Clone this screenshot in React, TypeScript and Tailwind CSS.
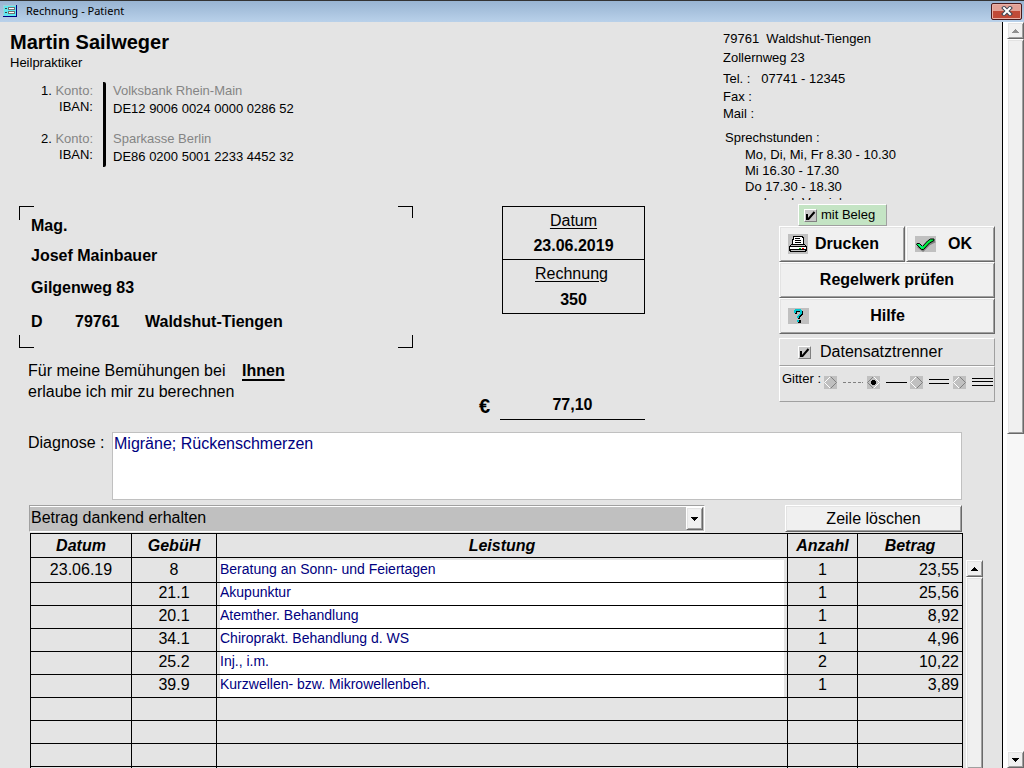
import React, { useState } from "react";
import clsx from "clsx";

const raised =
  "border border-t-white border-l-white border-r-[#696969] border-b-[#696969] bg-[#f0f0f0] shadow-[inset_1px_1px_#e3e3e3,inset_-1px_-1px_#a0a0a0]";
const etched = "border border-t-white border-l-white border-r-[#a0a0a0] border-b-[#a0a0a0]";

const positions = [
  { date: "23.06.19", code: "8", service: "Beratung an Sonn- und Feiertagen", count: "1", amount: "23,55" },
  { date: "", code: "21.1", service: "Akupunktur", count: "1", amount: "25,56" },
  { date: "", code: "20.1", service: "Atemther. Behandlung", count: "1", amount: "8,92" },
  { date: "", code: "34.1", service: "Chiroprakt. Behandlung d. WS", count: "1", amount: "4,96" },
  { date: "", code: "25.2", service: "Inj., i.m.", count: "2", amount: "10,22" },
  { date: "", code: "39.9", service: "Kurzwellen- bzw. Mikrowellenbeh.", count: "1", amount: "3,89" },
];

const emptyRows = [0, 1, 2, 3];

const accounts = [
  { nr: "1", bank: "Volksbank Rhein-Main", iban: "DE12 9006 0024 0000 0286 52" },
  { nr: "2", bank: "Sparkasse Berlin", iban: "DE86 0200 5001 2233 4452 32" },
];

const gridStyles = [
  { name: "Punktiert", line: "M0 4h3v1H0zM5 4h3v1H5zM10 4h3v1h-3zM15 4h3v1h-3zM19 4h1v1h-1z", color: "#808080" },
  { name: "Einfach", line: "M0 4h21v1H0z", color: "#000" },
  { name: "Doppelt", line: "M0 1h20v1H0zM0 5h20v1H0z", color: "#000" },
  { name: "Dreifach", line: "M0 0h21v1H0zM0 3h21v1H0zM0 7h21v1H0z", color: "#000" },
];

const FormIcon = () => (
  <svg width="14" height="12" viewBox="0 0 14 12" shapeRendering="crispEdges">
    <rect width="14" height="12" fill="#000080" />
    <rect width="13" height="11" fill="#5fe8f0" />
    <path d="M0 0h13v1H0zM0 0h1v11H0z" fill="#9fd0d8" />
    <path d="M2 3h2v1H2zM2 7h2v1H2z" fill="#404040" />
    <path d="M5 2h7v3H5zM5 6h7v3H5z" fill="#707070" />
    <path d="M6 3h5v1H6zM6 7h5v1H6z" fill="#fff" />
  </svg>
);

const PrinterIcon = () => (
  <svg width="20" height="20" viewBox="0 0 20 20" shapeRendering="crispEdges">
    <rect width="20" height="20" fill="#c0c0c0" />
    <path d="M5 2h10v1h1v7h1v1h1v1h1v5h-1v1H2v-1H1v-5h1v-1h1v-1h1V5h1z" fill="#000" />
    <path d="M6 3h8v1h1v6H5V6h1z" fill="#fff" />
    <path d="M7 4h5v1H7zM7 6h6v1H7zM7 8h6v1H7z" fill="#000" />
    <path d="M3 11h14v1H3z" fill="#c0c0c0" />
    <path d="M2 13h16v2H2z" fill="#fff" />
    <path d="M3 16h14v1H3z" fill="#c0c0c0" />
    <path d="M11 14h2v1h-2z" fill="#00c000" />
    <path d="M14 14h2v1h-2z" fill="#f00" />
  </svg>
);

const OkIcon = () => (
  <svg width="21" height="16" viewBox="0 0 21 16">
    <rect width="21" height="16" fill="#c0c0c0" />
    <path d="M3 10l5 4 6-6 6-3" stroke="#808080" strokeWidth="3" fill="none" />
    <path d="M2 7.5h2.5l3 3 5-5.5 3-2H19v1.5l-4.500 2.500-6 6.500H6.500L1.500 8.500z" fill="#00f040" stroke="#000" strokeWidth="1" />
    <path d="M3.500 8.500l3 2.500h1.500" stroke="#00ffc0" fill="none" />
  </svg>
);

const HelpIcon = () => (
  <svg width="21" height="16" viewBox="0 0 21 16" shapeRendering="crispEdges">
    <rect width="21" height="16" fill="#c0c0c0" />
    <path d="M8 2h6v1h1v4h-1v1h-1v1h-1v2h-2V8h1V7h1V6h1V4H9v2H7V3h1zM10 12h3v3h-3z" fill="#000" />
    <path d="M7 1h6v1h1v4h-1v1h-1v1h-1v2H9V8h1V7h1V6h1V3H8v2H6V2h1zM9 12h2v2H9z" fill="#00c8d0" />
  </svg>
);

const CloseIcon = () => (
  <svg width="12" height="10" viewBox="0 0 12 10">
    <path d="M3 2l6 6M9 2L3 8" stroke="#3f4754" strokeWidth="4" strokeLinecap="square" />
    <path d="M3 2l6 6M9 2L3 8" stroke="#fff" strokeWidth="2" strokeLinecap="square" />
  </svg>
);

const Arrow = ({ up, muted }: { up?: boolean; muted?: boolean }) => (
  <svg width="7" height="4" viewBox="0 0 7 4" shapeRendering="crispEdges">
    <path
      d={up ? "M3 0h1v1h1v1h1v1h1v1H0V3h1V2h1V1h1z" : "M0 0h7v1H6v1H5v1H4v1H3V3H2V2H1V1H0z"}
      fill={muted ? "#909090" : "#000"}
    />
  </svg>
);

const Check = ({ label, className }: { label: string; className: string }) => {
  const [checked, setChecked] = useState(true);

  return (
    <label className={clsx("flex items-center", className)}>
      <span className="grid h-[13px] w-[13px] shrink-0">
        <input
          type="checkbox"
          checked={checked}
          onChange={() => setChecked(!checked)}
          className="[grid-area:1/1] appearance-none border border-t-white border-l-white border-r-[#808080] border-b-[#808080] bg-[#c8c8c8]"
        />
        {checked && (
          <svg className="pointer-events-none [grid-area:1/1]" width="13" height="13" viewBox="0 0 13 13">
            <path d="M3 5v5h1.500l6-7" stroke="#000" strokeWidth="2" fill="none" />
          </svg>
        )}
      </span>
      <span>{label}</span>
    </label>
  );
};

const TitleBar = () => (
  <header className="flex h-[22px] shrink-0 items-center border-t border-[#333] bg-linear-to-b from-[#98b4d2] to-[#b9d1ea] pr-0.5 pb-px pl-[3px]">
    <FormIcon />
    <h1 className="ml-[9px] flex-1 font-['Noto_Sans',sans-serif] text-[11px] leading-5">Rechnung - Patient</h1>
    <button
      aria-label="Schließen"
      className="flex h-[17px] w-[31px] items-center justify-center rounded-xs border border-[#4a1a1c] bg-linear-to-b from-[#e2a196] from-45% to-[#c04a38] to-50% shadow-[inset_0_0_0_1px_#e8b0a6]"
    >
      <CloseIcon />
    </button>
  </header>
);

const Practice = () => (
  <section className="pt-2 pl-[10px]">
    <h2 className="text-xl leading-6 font-bold">Martin Sailweger</h2>
    <p className="text-[13px] leading-[18px]">Heilpraktiker</p>
    <div className="mt-[10px] flex text-[13px]">
      <div className="flex w-24 flex-col gap-4 rounded-xs border-r-3 border-black pt-px pr-[10px] pb-1 text-right leading-4">
        {accounts.map((account) => (
          <div key={account.nr}>
            <p>{account.nr}. <span className="text-[#848484]">Konto:</span></p>
            <p>IBAN:</p>
          </div>
        ))}
      </div>
      <div className="flex flex-col gap-3 pt-px pl-[7px] leading-4">
        {accounts.map((account) => (
          <div key={account.nr}>
            <p className="text-[#848484]">{account.bank}</p>
            <p className="leading-5">{account.iban}</p>
          </div>
        ))}
      </div>
    </div>
  </section>
);

const Recipient = () => (
  <address className="relative h-[142px] w-[394px] pt-[5px] pl-3 font-bold not-italic">
    <span className="absolute top-0 left-0 h-[14px] w-[15px] border-t border-l border-black" />
    <span className="absolute top-0 right-0 h-3 w-[15px] border-t border-r border-black" />
    <span className="absolute bottom-0 left-0 h-[13px] w-[15px] border-b border-l border-black" />
    <span className="absolute right-0 bottom-0 h-[13px] w-[15px] border-r border-b border-black" />
    <p className="leading-[30px]">Mag.</p>
    <p className="leading-[30px]">Josef Mainbauer</p>
    <p className="leading-[34px]">Gilgenweg 83</p>
    <p className="flex leading-[34px]">
      <span className="w-11">D</span>
      <span className="w-[70px]">79761</span>
      <span>Waldshut-Tiengen</span>
    </p>
  </address>
);

const InvoiceBox = () => (
  <dl className="w-[143px] border border-black text-center">
    <div className="h-[53px] border-b border-black">
      <dt className="leading-7 underline underline-offset-2">Datum</dt>
      <dd className="leading-[22px] font-bold">23.06.2019</dd>
    </div>
    <div className="h-[53px]">
      <dt className="pr-1 leading-7 underline underline-offset-2">Rechnung</dt>
      <dd className="leading-6 font-bold">350</dd>
    </div>
  </dl>
);

const Contact = () => (
  <section className="h-[178px] overflow-hidden pt-2 text-[13px] leading-[18px]">
    <p>79761&nbsp; Waldshut-Tiengen</p>
    <p className="leading-5">Zollernweg 23</p>
    <p className="mt-0.5">Tel. :&nbsp;&nbsp; 07741 - 12345</p>
    <p>Fax :</p>
    <p className="leading-4">Mail :</p>
    <p className="mt-[7px] pl-0.5">Sprechstunden :</p>
    <p className="pl-[22px] leading-4 whitespace-pre-line">
      {"Mo, Di, Mi, Fr 8.30 - 10.30\nMi 16.30 - 17.30\nDo 17.30 - 18.30\nund nach Vereinbarung"}
    </p>
  </section>
);

const GridChoice = () => {
  const [selected, setSelected] = useState("Einfach");

  return (
    <div
      role="radiogroup"
      aria-labelledby="gitter"
      className={clsx("flex h-9 items-start justify-between pr-px pl-0.5 font-normal", etched)}
    >
      <span id="gitter" className="text-[13px] leading-6">Gitter :</span>
      <div className="flex gap-[3px] pt-[9px]">
        {gridStyles.map((style) => {
          const checked = selected === style.name;
          return (
            <label key={style.name} className="flex items-center gap-[6px]">
              <span className="grid h-[13px] w-[13px] bg-[#c0c0c0]">
                <input
                  type="radio"
                  name="gitter"
                  aria-label={style.name}
                  checked={checked}
                  onChange={() => setSelected(style.name)}
                  className="[grid-area:1/1] appearance-none"
                />
                <svg className="pointer-events-none [grid-area:1/1]" width="13" height="13" viewBox="0 0 13 13">
                  <path d="M6.5 .5l-6 6 6 6" stroke={checked ? "#808080" : "#fff"} fill="none" />
                  <path d="M6.5 .5l6 6-6 6" stroke={checked ? "#fff" : "#808080"} fill="none" />
                  {checked && <path d="M5 4h3v1h1v3H8v1H5V8H4V5h1z" fill="#000" />}
                </svg>
              </span>
              <svg width="21" height="9" viewBox="0 0 21 9" shapeRendering="crispEdges">
                <path d={style.line} fill={style.color} />
              </svg>
            </label>
          );
        })}
      </div>
    </div>
  );
};

const Actions = () => (
  <section className="pt-1 pl-14 font-bold">
    <div className="flex pl-[19px]">
      <Check
        label="mit Beleg"
        className={clsx("h-[22px] w-[89px] gap-1 bg-[#c4e4c4] pl-[5px] text-[13px] font-normal", etched)}
      />
    </div>
    <div className="flex gap-px">
      <button className={clsx("flex h-9 flex-1 items-center gap-[7px] pl-2", raised)}>
        <PrinterIcon /> Drucken
      </button>
      <button className={clsx("flex h-9 w-[89px] items-center gap-3 pl-2", raised)}>
        <OkIcon /> OK
      </button>
    </div>
    <button className={clsx("block h-9 w-full", raised)}>Regelwerk prüfen</button>
    <button className={clsx("flex h-9 w-full items-center pr-7 pl-2", raised)}>
      <HelpIcon />
      <span className="flex-1">Hilfe</span>
    </button>
    <div className={clsx("mt-1 flex h-7 items-center pl-[18px] font-normal", etched)}>
      <Check label="Datensatztrenner" className="gap-[9px]" />
    </div>
    <GridChoice />
  </section>
);

const Positions = () => (
  <div className="flex min-h-0 flex-1 gap-[3px] overflow-hidden pr-[19px] pl-[30px]">
    <table className="w-full table-fixed border-collapse self-start text-center [&_td]:border [&_td]:border-black [&_th]:border [&_th]:border-black">
      <colgroup>
        <col className="w-[101px]" />
        <col className="w-[85px]" />
        <col />
        <col className="w-[70px]" />
        <col className="w-[105px]" />
      </colgroup>
      <thead>
        <tr className="h-6 leading-[23px] italic">
          <th>Datum</th>
          <th>GebüH</th>
          <th>Leistung</th>
          <th>Anzahl</th>
          <th>Betrag</th>
        </tr>
      </thead>
      <tbody>
        {positions.map((position) => (
          <tr key={position.code} className="h-[23px] leading-5 first:[&>td]:pt-[2px]">
            <td className="pb-[2px]">{position.date}</td>
            <td className="pb-[2px]">{position.code}</td>
            <td className="px-[3px]">
              <input
                aria-label="Leistung"
                defaultValue={position.service}
                className="block h-[22px] w-full bg-white pb-[5px] text-sm leading-4 text-[#000080]"
              />
            </td>
            <td className="pb-[2px]">{position.count}</td>
            <td className="pr-[3px] pb-[2px] text-right">{position.amount}</td>
          </tr>
        ))}
        {emptyRows.map((row) => (
          <tr key={row} className="h-[23px]">
            <td /><td /><td /><td /><td />
          </tr>
        ))}
      </tbody>
    </table>
    <div className="mt-[27px] flex w-[17px] shrink-0 flex-col">
      <button aria-label="Nach oben" className={clsx("flex h-[17px] shrink-0 items-center justify-center", raised)}>
        <Arrow up />
      </button>
      <div className={clsx("flex-1 border-b-0", raised)} />
    </div>
  </div>
);

const ScrollBar = () => (
  <aside className="flex w-[21px] shrink-0 flex-col border-l-4 border-white bg-[#f7f7f7]">
    <button aria-label="Seite nach oben" className={clsx("flex h-[17px] shrink-0 items-center justify-center", raised)}>
      <Arrow up muted />
    </button>
    <div className={clsx("h-[53%]", raised)} />
    <div className="flex-1" />
    <button aria-label="Seite nach unten" className={clsx("flex h-[17px] shrink-0 items-center justify-center", raised)}>
      <Arrow />
    </button>
  </aside>
);

export default function App() {
  return (
    <div className="flex h-screen flex-col overflow-hidden bg-[#e4e4e4] font-['Liberation_Sans',Arial,sans-serif] text-base text-black">
      <TitleBar />
      <div className="flex min-h-0 flex-1">
        <main className="flex min-w-0 flex-1 flex-col border-r border-black">
          <div className="flex shrink-0 justify-between">
            <div>
              <Practice />
              <div className="mt-[39px] flex pl-[19px]">
                <Recipient />
                <div className="ml-[89px]">
                  <InvoiceBox />
                </div>
              </div>
              <div className="mt-3 flex pl-7">
                <p className="w-[214px] leading-[21px]">Für meine Bemühungen bei erlaube ich mir zu berechnen</p>
                <p className="w-[237px] leading-[21px] font-bold underline decoration-2 underline-offset-3">Ihnen</p>
                <div className="mt-[33px] flex font-bold">
                  <span className="w-[21px] text-xl leading-[27px]">€</span>
                  <output className="w-[145px] border-b border-black text-center leading-6">77,10</output>
                </div>
              </div>
            </div>
            <div className="mr-[6px] w-[273px] pr-px">
              <Contact />
              <Actions />
            </div>
          </div>
          <div className="mt-3 flex shrink-0 pr-10 pl-7">
            <label htmlFor="diagnose" className="w-[84px] leading-[22px]">Diagnose :</label>
            <textarea
              id="diagnose"
              defaultValue="Migräne; Rückenschmerzen"
              className="h-[68px] flex-1 resize-none border border-[#c0c0c0] bg-white px-px leading-[22px] text-[#000080]"
            />
          </div>
          <div className="mt-[5px] mb-px flex h-[27px] shrink-0 justify-between gap-20 pr-10 pl-[29px]">
            <div className="relative flex-1 border border-t-[#a0a0a0] border-r-white border-b-white border-l-[#a0a0a0]">
              <select
                aria-label="Zahlungsvermerk"
                className="block h-full w-full appearance-none border-t border-white bg-[#c0c0c0] pb-[3px] pl-px leading-5"
              >
                <option>Betrag dankend erhalten</option>
              </select>
              <span className={clsx("pointer-events-none absolute top-px right-px bottom-px flex w-[17px] items-center justify-center", raised)}>
                <Arrow />
              </span>
            </div>
            <button className={clsx("w-[177px]", raised)}>Zeile löschen</button>
          </div>
          <Positions />
        </main>
        <ScrollBar />
      </div>
    </div>
  );
}
